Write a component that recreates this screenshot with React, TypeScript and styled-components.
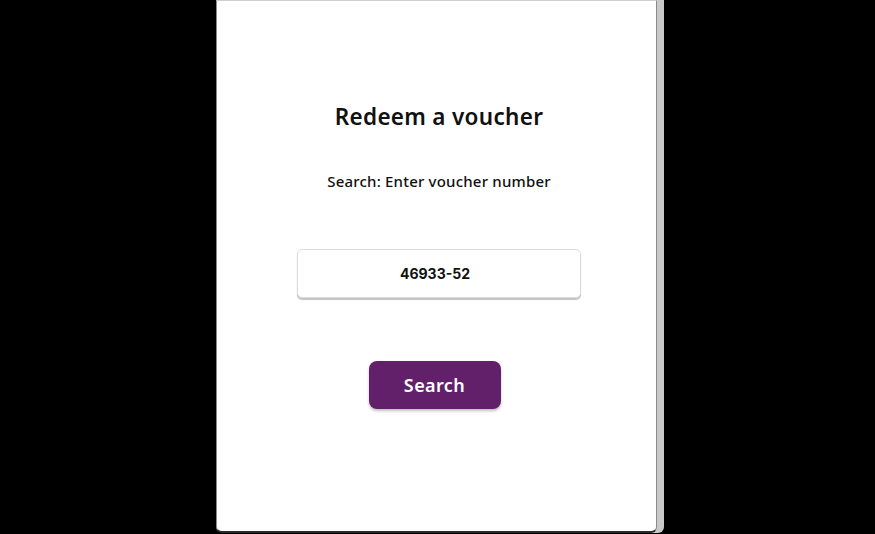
import styled, { createGlobalStyle } from "styled-components";

const GlobalStyle = createGlobalStyle`
  html, body {
    margin: 0;
    padding: 0;
    background: #000;
    height: 100%;
  }

  #root {
    height: 100%;
  }
`;

const Page = styled.main`
  display: flex;
  justify-content: center;
  height: 534px;
  padding-right: 3px;
  font-family: "Noto Sans", "Open Sans", sans-serif;
`;

const Card = styled.section`
  box-sizing: border-box;
  width: 441px;
  height: 533px;
  background: #fff;
  border: 1px solid #8a8a8a;
  border-top-color: #d0d0d0;
  border-bottom: 2px solid #2a2a2a;
  border-radius: 0 0 6px 6px;
  box-shadow: 7px 0 0 #c9c9c9;

  display: flex;
  flex-direction: column;
  align-items: center;
  padding: 101px 0 0 6px;
`;

const Title = styled.h1`
  margin: 0;
  font-size: 22.5px;
  line-height: 30px;
  font-weight: 600;
  color: #111;
  letter-spacing: 0.3px;
`;

const Label = styled.p`
  margin: 39px 0 0;
  font-size: 15px;
  line-height: 20px;
  font-weight: 500;
  color: #111;
  letter-spacing: 0.2px;
`;

const VoucherInput = styled.input`
  box-sizing: border-box;
  margin-top: 58px;
  width: 284px;
  height: 49px;
  padding: 0 8px 0 0;
  border: 1px solid #dcdcdc;
  border-radius: 5px;
  box-shadow: 0 2px 1px #c4c4c4;
  background: #fff;
  text-align: center;
  font-family: Inter, "Noto Sans", sans-serif;
  font-size: 14px;
  font-weight: 700;
  color: #111;
  outline: none;
`;

const SearchButton = styled.button`
  margin: 63px 9px 0 0;
  width: 132px;
  height: 48px;
  border: none;
  border-radius: 8px;
  background: #63206a;
  box-shadow: 0 2px 3px rgba(0, 0, 0, 0.25);
  color: #fff;
  font-family: "Noto Sans", sans-serif;
  font-size: 18px;
  font-weight: 600;
  letter-spacing: 0.4px;
  cursor: pointer;
`;

const App: React.FC = () => {
  return (
    <>
      <GlobalStyle />
      <Page>
        <Card>
          <Title>Redeem a voucher</Title>
          <Label>Search: Enter voucher number</Label>
          <VoucherInput defaultValue="46933-52" />
          <SearchButton>Search</SearchButton>
        </Card>
      </Page>
    </>
  );
};

export default App;
